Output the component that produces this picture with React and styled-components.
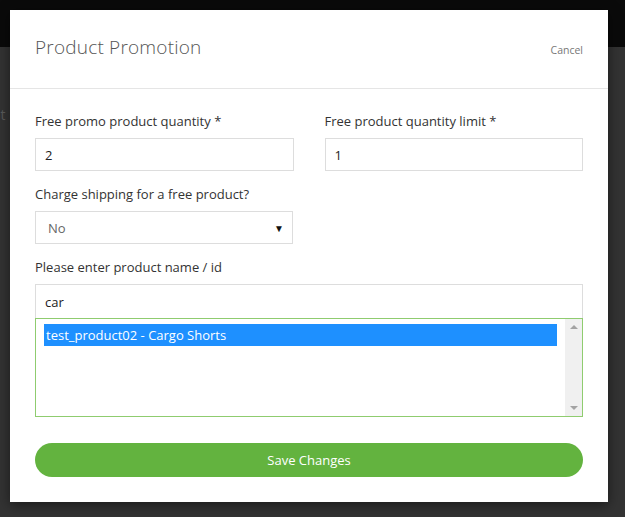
import React from "react";
import styled, { createGlobalStyle } from "styled-components";

const Global = createGlobalStyle`
  html, body { margin: 0; padding: 0; }
  body {
    width: 625px;
    height: 517px;
    overflow: hidden;
    font-family: "Open Sans", "Noto Sans", sans-serif;
    background: #333333;
  }
`;

const Page = styled.div`
  position: relative;
  width: 625px;
  height: 517px;
  background: #333333;
  overflow: hidden;
`;

const TopBar = styled.div`
  height: 47px;
  background: #0a0a0a;
`;

const Behind = styled.div`
  padding: 58px 0 0 0;
  margin-left: -8px;
  font-size: 14px;
  color: #5a5a5a;
`;

const Modal = styled.div`
  position: absolute;
  left: 10px;
  top: 10px;
  width: 598px;
  background: #ffffff;
  box-shadow: 0 3px 12px rgba(0, 0, 0, 0.5);
`;

const Header = styled.div`
  height: 78px;
  padding: 0 25px;
  display: flex;
  align-items: center;
  justify-content: space-between;
  border-bottom: 1px solid #e5e5e5;
`;

const Title = styled.h1`
  margin: 0 0 4px 0;
  font-size: 19px;
  font-weight: 300;
  color: #555555;
  letter-spacing: 0.2px;
`;

const Cancel = styled.a`
  font-size: 10.5px;
  color: #777777;
  cursor: pointer;
  margin-top: 2px;
`;

const Body = styled.div`
  padding: 22px 25px 25px 25px;
`;

const Row = styled.div`
  display: grid;
  grid-template-columns: ${(p) => p.cols || "1fr"};
  column-gap: 31px;
  margin-bottom: ${(p) => p.mb || "13px"};
`;

const Field = styled.div`
  display: flex;
  flex-direction: column;
`;

const Label = styled.label`
  font-size: 13px;
  line-height: 20px;
  color: #333333;
  margin-bottom: 7px;
`;

const Input = styled.div`
  height: ${(p) => (p.attached ? "34px" : "33px")};
  box-sizing: border-box;
  border: 1px solid #dddddd;
  ${(p) => (p.attached ? "border-bottom: none;" : "")}
  padding: 0 9px;
  display: flex;
  align-items: center;
  font-size: 13px;
  color: #222222;
`;

const Select = styled(Input)`
  justify-content: space-between;
  padding: 0 8px 0 12px;
  color: #666666;
`;

const Caret = styled.span`
  font-size: 10px;
  color: #111111;
`;

const List = styled.div`
  height: 99px;
  box-sizing: border-box;
  border: 1px solid #8fcc6f;
  display: flex;
`;

const Options = styled.div`
  flex: 1;
  padding: 5px 8px 0 8px;
`;

const Option = styled.div`
  height: 22px;
  display: flex;
  align-items: center;
  padding: 0 2px;
  background: ${(p) => (p.selected ? "#1e90ff" : "transparent")};
  color: ${(p) => (p.selected ? "#ffffff" : "#333333")};
  font-size: 13px;
`;

const Scrollbar = styled.div`
  width: 17px;
  background: #f0f0f0;
  display: flex;
  flex-direction: column;
  justify-content: space-between;
  align-items: center;
  padding: 6px 0;
`;

const Arrow = styled.span`
  width: 0;
  height: 0;
  border-left: 4px solid transparent;
  border-right: 4px solid transparent;
  ${(p) =>
    p.down
      ? "border-top: 4px solid #a3a3a3;"
      : "border-bottom: 4px solid #a3a3a3;"}
`;

const SaveButton = styled.button`
  display: block;
  width: 100%;
  height: 34px;
  margin-top: 26px;
  border: none;
  border-radius: 17px;
  background: #63b33f;
  color: #ffffff;
  font-family: "Open Sans", "Noto Sans", sans-serif;
  font-size: 13px;
  cursor: pointer;
`;

export default function App() {
  return (
    <Page>
      <Global />
      <TopBar />
      <Behind>nt</Behind>
      <Modal>
        <Header>
          <Title>Product Promotion</Title>
          <Cancel>Cancel</Cancel>
        </Header>
        <Body>
          <Row cols="1fr 1fr">
            <Field>
              <Label>Free promo product quantity *</Label>
              <Input>2</Input>
            </Field>
            <Field>
              <Label>Free product quantity limit *</Label>
              <Input>1</Input>
            </Field>
          </Row>
          <Row cols="258px 1fr">
            <Field>
              <Label>Charge shipping for a free product?</Label>
              <Select>
                <span>No</span>
                <Caret>▼</Caret>
              </Select>
            </Field>
          </Row>
          <Row mb="0">
            <Field>
              <Label>Please enter product name / id</Label>
              <Input attached>car</Input>
              <List>
                <Options>
                  <Option selected>test_product02 - Cargo Shorts</Option>
                </Options>
                <Scrollbar>
                  <Arrow />
                  <Arrow down />
                </Scrollbar>
              </List>
            </Field>
          </Row>
          <SaveButton>Save Changes</SaveButton>
        </Body>
      </Modal>
    </Page>
  );
}
